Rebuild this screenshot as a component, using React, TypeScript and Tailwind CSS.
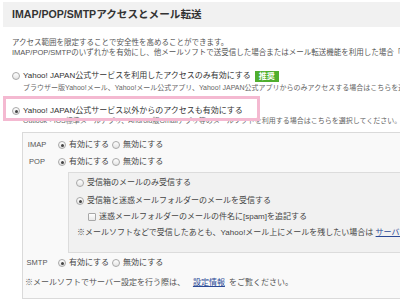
import React from "react"

function Radio({ checked }: { checked?: boolean }) {
  return (
    <span className="w-[8px] h-[8px] rounded-full border border-[#a8a8a8] bg-linear-to-b from-white to-[#e4e4e4] flex items-center justify-center shrink-0">
      {checked && <span className="w-[3px] h-[3px] rounded-full bg-[#444]" />}
    </span>
  )
}

function Check() {
  return <span className="w-[8px] h-[8px] rounded-[1px] border border-[#a8a8a8] bg-linear-to-b from-white to-[#e8e8e8] shrink-0" />
}

function Toggle({ label, on = true }: { label: string; on?: boolean }) {
  return (
    <div className="flex items-center h-[12px]">
      <span className="w-[28px] text-center text-[7.5px] text-[#555]">{label}</span>
      <div className="ml-[7px] flex items-center text-[8px] text-[#444]">
        <Radio checked={on} />
        <span className="ml-[3px]">有効にする</span>
        <span className="ml-[3px]">
          <Radio checked={!on} />
        </span>
        <span className="ml-[3px]">無効にする</span>
      </div>
    </div>
  )
}

export default function App() {
  return (
    <div className="relative w-[400px] h-[307px] overflow-hidden bg-white whitespace-nowrap font-['Liberation_Sans','Noto_Sans_CJK_JP',sans-serif]">
      {/* Header */}
      <div className="ml-[3px] mt-[2px] h-[25px] bg-[#f1f1f1] flex items-center pl-[9px]">
        <h1 className="text-[10.6px] font-bold text-[#333]">IMAP/POP/SMTPアクセスとメール転送</h1>
      </div>

      {/* Description */}
      <div className="mt-[11px] pl-[12px] text-[7.5px] leading-[10px] text-[#555]">
        <div>アクセス範囲を限定することで安全性を高めることができます。</div>
        <div>IMAP/POP/SMTPのいずれかを有効にし、他メールソフトで送受信した場合またはメール転送機能を利用した場合「</div>
      </div>

      {/* Option 1 */}
      <div className="mt-[12px] pl-[12px] flex items-center h-[12px]">
        <Radio />
        <span className="ml-[3px] text-[8px] text-[#333]">Yahoo! JAPAN公式サービスを利用したアクセスのみ有効にする</span>
        <span className="ml-[4px] h-[11px] px-[4px] bg-[#4fae2e] text-white text-[8px] font-bold leading-[11px]">推奨</span>
      </div>
      <div className="mt-[1px] pl-[23px] text-[7px] leading-[10px] text-[#666]">
        ブラウザー版Yahoo!メール、Yahoo!メール公式アプリ、Yahoo! JAPAN公式アプリからのみアクセスする場合はこちらを選択してください。
      </div>

      {/* Option 2 */}
      <div className="mt-[12px] pl-[12px] flex items-center h-[12px]">
        <Radio checked />
        <span className="ml-[3px] text-[8px] text-[#333]">Yahoo! JAPAN公式サービス以外からのアクセスも有効にする</span>
      </div>
      <div className="-mt-[1px] pl-[23px] text-[7px] leading-[10px] text-[#666]">
        Outlook・iOS標準メールアプリ、Android版Gmailアプリ等のメールソフトを利用する場合はこちらを選択してください。
      </div>

      {/* Settings panel */}
      <div className="mt-[6px] ml-[22px] w-[390px] border border-[#dadada] bg-[#f9f9f9] pt-[6px] pb-[9px]">
        <Toggle label="IMAP" />
        <div className="mt-[5px]">
          <Toggle label="POP" />
        </div>

        <div className="mt-[4px] ml-[45px] border border-[#dcdcdc] bg-[#f1f1f1] pt-[4px] pb-[13px] text-[8px] text-[#444]">
          <div className="pl-[7px] flex items-center h-[12px]">
            <Radio />
            <span className="ml-[3px]">受信箱のメールのみ受信する</span>
          </div>
          <div className="mt-[6px] pl-[7px] flex items-center h-[12px]">
            <Radio checked />
            <span className="ml-[3px]">受信箱と迷惑メールフォルダーのメールを受信する</span>
          </div>
          <div className="mt-[4px] pl-[19px] flex items-center h-[12px]">
            <Check />
            <span className="ml-[3px]">迷惑メールフォルダーのメールの件名に[spam]を追記する</span>
          </div>
          <div className="mt-[4px] pl-[8px] h-[12px] leading-[12px]">
            ※メールソフトなどで受信したあとも、Yahoo!メール上にメールを残したい場合は{" "}
            <span className="text-[#2b4a96] underline">サーバーにメールを残す</span>
          </div>
        </div>

        <div className="mt-[4px]">
          <Toggle label="SMTP" />
        </div>
        <div className="mt-[8px] pl-[2px] h-[12px] leading-[12px] text-[8px] text-[#555]">
          ※メールソフトでサーバー設定を行う際は、
          <span className="ml-[8px] text-[#2b4a96] underline">設定情報</span>
          <span className="ml-[4px]">をご覧ください。</span>
        </div>
      </div>

      {/* Highlight annotation */}
      <div className="absolute left-[3px] top-[96px] w-[257px] h-[25px] border-[3px] border-[#f4b9d1]" />
    </div>
  )
}
